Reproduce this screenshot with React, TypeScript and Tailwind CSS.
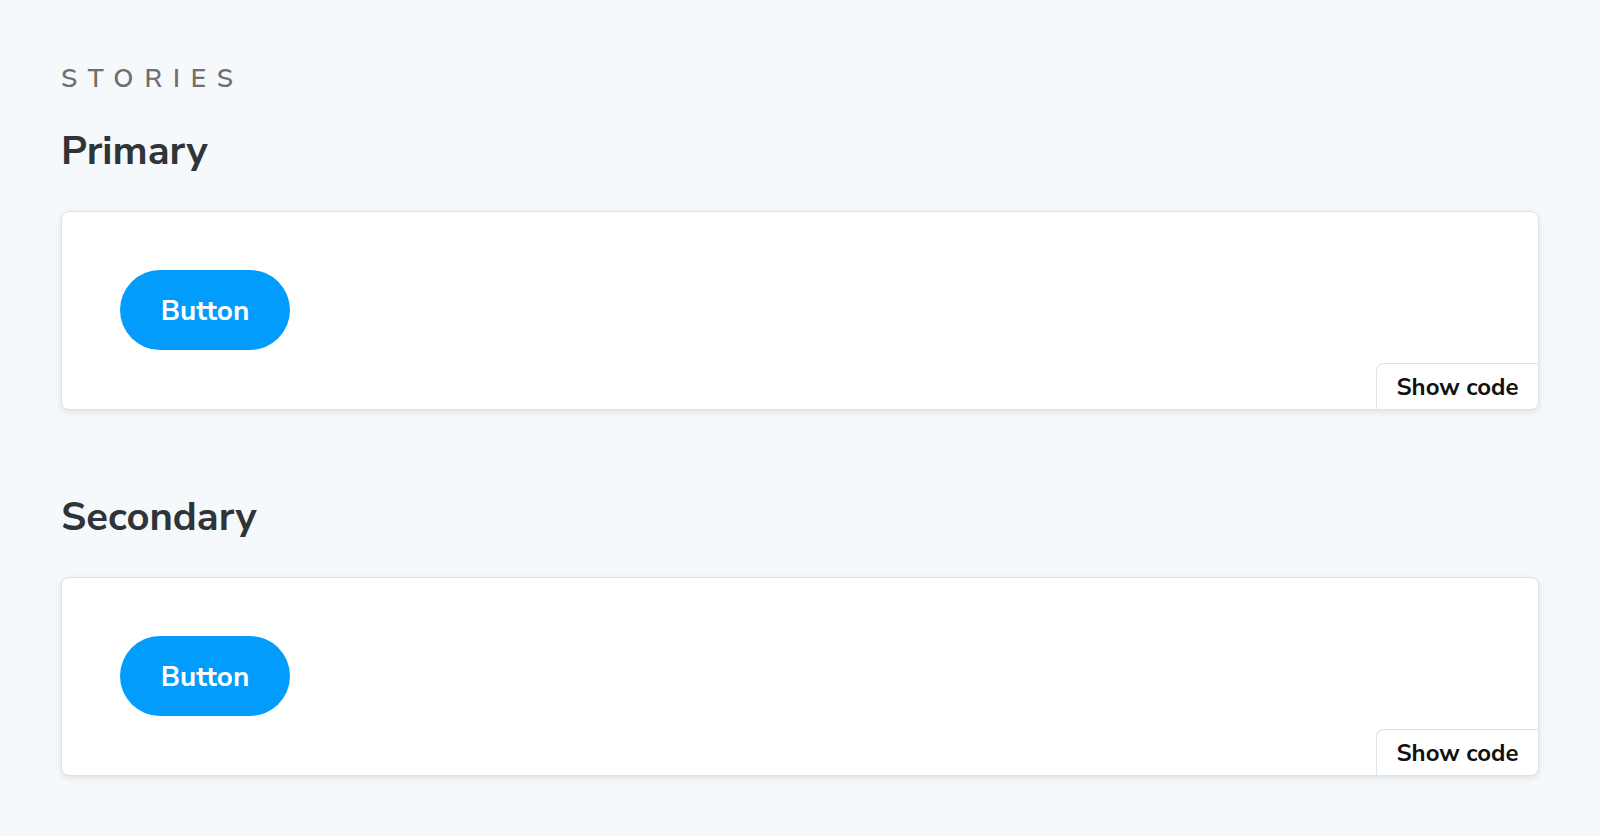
const stories = ["Primary", "Secondary"];

function Story({ name }: { name: string }) {
  return (
    <section className="mb-[87px]">
      <h3 className="text-[40px] leading-none font-bold text-[#2e3438]">{name}</h3>
      <div className="relative mt-[40px] h-[199px] rounded-[8px] border border-[#dde3e8] bg-white shadow-[0_2px_6px_rgba(0,0,0,0.1)] p-[58px]">
        <button className="h-[80px] w-[170px] rounded-full bg-[#029cfd] pt-[2px] text-[28px] font-bold text-white">
          Button
        </button>
        <button className="absolute right-0 bottom-0 h-[46px] w-[162px] rounded-tl-[8px] rounded-br-[8px] border-t border-l border-[#dde3e8] bg-white text-[24px] font-bold text-[#111]">
          Show code
        </button>
      </div>
    </section>
  );
}

export default function App() {
  return (
    <div
      className="min-h-screen bg-[#f6f9fc] px-[61px] pt-[66px]"
      style={{ fontFamily: '"Nunito Sans", Lato, "Noto Sans", sans-serif' }}
    >
      <h2 className="text-[26px] leading-none font-semibold tracking-[0.42em] text-[#6f6f6f]">STORIES</h2>
      <div className="mt-[39px]">
        {stories.map((s) => (
          <Story key={s} name={s} />
        ))}
      </div>
    </div>
  );
}
